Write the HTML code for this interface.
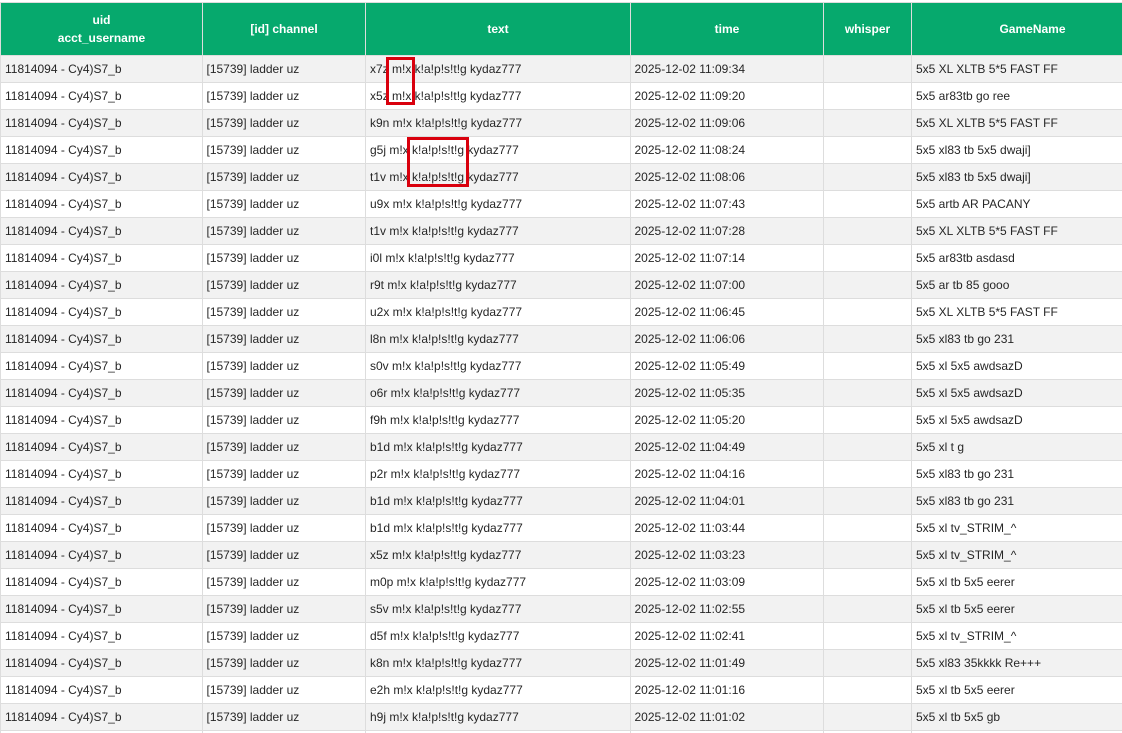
<!DOCTYPE html>
<html><head><meta charset="utf-8">
<style>
html,body{margin:0;padding:0;width:1122px;height:733px;overflow:hidden;background:#fff}
body{position:relative;font-family:"Liberation Sans",Arial,sans-serif;font-size:12px;color:#262626}
.tb{position:absolute;left:0;top:2px;width:1122px;height:760px;overflow:hidden}
table{border-collapse:collapse;table-layout:fixed;width:1153px;position:absolute;left:0;top:0}
th,td{border:1px solid #ddd;box-sizing:border-box;padding:0 5px 0 5px;white-space:nowrap;overflow:hidden}
thead th{background:#06a96d;color:#fff;font-weight:bold;text-align:center;height:53px;line-height:18px;border-color:#ddd}
tbody td{height:27px;line-height:26px;text-align:left;padding-left:4px}
tbody td:nth-child(1){padding-left:4px}
tbody td:nth-child(2){padding-left:3.5px}
tbody td:nth-child(3){padding-left:4px}
tbody td:nth-child(4){padding-left:3.5px}
tbody tr:nth-child(odd) td{background:#f2f2f2}
tbody tr:nth-child(even) td{background:#fff}
.r{position:absolute;border:3px solid #d9000d;box-sizing:border-box}
</style></head><body>
<div class="tb"><table>
<colgroup><col style="width:202px"><col style="width:163px"><col style="width:265px"><col style="width:193px"><col style="width:88px"><col style="width:242px"></colgroup>
<thead><tr><th>uid<br>acct_username</th><th>[id] channel</th><th>text</th><th>time</th><th>whisper</th><th>GameName</th></tr></thead>
<tbody>
<tr><td>11814094 - Cy4)S7_b</td><td>[15739] ladder uz</td><td>x7z m!x k!a!p!s!t!g kydaz777</td><td>2025-12-02 11:09:34</td><td></td><td>5x5 XL XLTB 5*5 FAST FF</td></tr>
<tr><td>11814094 - Cy4)S7_b</td><td>[15739] ladder uz</td><td>x5z m!x k!a!p!s!t!g kydaz777</td><td>2025-12-02 11:09:20</td><td></td><td>5x5 ar83tb go ree</td></tr>
<tr><td>11814094 - Cy4)S7_b</td><td>[15739] ladder uz</td><td>k9n m!x k!a!p!s!t!g kydaz777</td><td>2025-12-02 11:09:06</td><td></td><td>5x5 XL XLTB 5*5 FAST FF</td></tr>
<tr><td>11814094 - Cy4)S7_b</td><td>[15739] ladder uz</td><td>g5j m!x k!a!p!s!t!g kydaz777</td><td>2025-12-02 11:08:24</td><td></td><td>5x5 xl83 tb 5x5 dwaji]</td></tr>
<tr><td>11814094 - Cy4)S7_b</td><td>[15739] ladder uz</td><td>t1v m!x k!a!p!s!t!g kydaz777</td><td>2025-12-02 11:08:06</td><td></td><td>5x5 xl83 tb 5x5 dwaji]</td></tr>
<tr><td>11814094 - Cy4)S7_b</td><td>[15739] ladder uz</td><td>u9x m!x k!a!p!s!t!g kydaz777</td><td>2025-12-02 11:07:43</td><td></td><td>5x5 artb AR PACANY</td></tr>
<tr><td>11814094 - Cy4)S7_b</td><td>[15739] ladder uz</td><td>t1v m!x k!a!p!s!t!g kydaz777</td><td>2025-12-02 11:07:28</td><td></td><td>5x5 XL XLTB 5*5 FAST FF</td></tr>
<tr><td>11814094 - Cy4)S7_b</td><td>[15739] ladder uz</td><td>i0l m!x k!a!p!s!t!g kydaz777</td><td>2025-12-02 11:07:14</td><td></td><td>5x5 ar83tb asdasd</td></tr>
<tr><td>11814094 - Cy4)S7_b</td><td>[15739] ladder uz</td><td>r9t m!x k!a!p!s!t!g kydaz777</td><td>2025-12-02 11:07:00</td><td></td><td>5x5 ar tb 85 gooo</td></tr>
<tr><td>11814094 - Cy4)S7_b</td><td>[15739] ladder uz</td><td>u2x m!x k!a!p!s!t!g kydaz777</td><td>2025-12-02 11:06:45</td><td></td><td>5x5 XL XLTB 5*5 FAST FF</td></tr>
<tr><td>11814094 - Cy4)S7_b</td><td>[15739] ladder uz</td><td>l8n m!x k!a!p!s!t!g kydaz777</td><td>2025-12-02 11:06:06</td><td></td><td>5x5 xl83 tb go 231</td></tr>
<tr><td>11814094 - Cy4)S7_b</td><td>[15739] ladder uz</td><td>s0v m!x k!a!p!s!t!g kydaz777</td><td>2025-12-02 11:05:49</td><td></td><td>5x5 xl 5x5 awdsazD</td></tr>
<tr><td>11814094 - Cy4)S7_b</td><td>[15739] ladder uz</td><td>o6r m!x k!a!p!s!t!g kydaz777</td><td>2025-12-02 11:05:35</td><td></td><td>5x5 xl 5x5 awdsazD</td></tr>
<tr><td>11814094 - Cy4)S7_b</td><td>[15739] ladder uz</td><td>f9h m!x k!a!p!s!t!g kydaz777</td><td>2025-12-02 11:05:20</td><td></td><td>5x5 xl 5x5 awdsazD</td></tr>
<tr><td>11814094 - Cy4)S7_b</td><td>[15739] ladder uz</td><td>b1d m!x k!a!p!s!t!g kydaz777</td><td>2025-12-02 11:04:49</td><td></td><td>5x5 xl t g</td></tr>
<tr><td>11814094 - Cy4)S7_b</td><td>[15739] ladder uz</td><td>p2r m!x k!a!p!s!t!g kydaz777</td><td>2025-12-02 11:04:16</td><td></td><td>5x5 xl83 tb go 231</td></tr>
<tr><td>11814094 - Cy4)S7_b</td><td>[15739] ladder uz</td><td>b1d m!x k!a!p!s!t!g kydaz777</td><td>2025-12-02 11:04:01</td><td></td><td>5x5 xl83 tb go 231</td></tr>
<tr><td>11814094 - Cy4)S7_b</td><td>[15739] ladder uz</td><td>b1d m!x k!a!p!s!t!g kydaz777</td><td>2025-12-02 11:03:44</td><td></td><td>5x5 xl tv_STRIM_^</td></tr>
<tr><td>11814094 - Cy4)S7_b</td><td>[15739] ladder uz</td><td>x5z m!x k!a!p!s!t!g kydaz777</td><td>2025-12-02 11:03:23</td><td></td><td>5x5 xl tv_STRIM_^</td></tr>
<tr><td>11814094 - Cy4)S7_b</td><td>[15739] ladder uz</td><td>m0p m!x k!a!p!s!t!g kydaz777</td><td>2025-12-02 11:03:09</td><td></td><td>5x5 xl tb 5x5 eerer</td></tr>
<tr><td>11814094 - Cy4)S7_b</td><td>[15739] ladder uz</td><td>s5v m!x k!a!p!s!t!g kydaz777</td><td>2025-12-02 11:02:55</td><td></td><td>5x5 xl tb 5x5 eerer</td></tr>
<tr><td>11814094 - Cy4)S7_b</td><td>[15739] ladder uz</td><td>d5f m!x k!a!p!s!t!g kydaz777</td><td>2025-12-02 11:02:41</td><td></td><td>5x5 xl tv_STRIM_^</td></tr>
<tr><td>11814094 - Cy4)S7_b</td><td>[15739] ladder uz</td><td>k8n m!x k!a!p!s!t!g kydaz777</td><td>2025-12-02 11:01:49</td><td></td><td>5x5 xl83 35kkkk Re+++</td></tr>
<tr><td>11814094 - Cy4)S7_b</td><td>[15739] ladder uz</td><td>e2h m!x k!a!p!s!t!g kydaz777</td><td>2025-12-02 11:01:16</td><td></td><td>5x5 xl tb 5x5 eerer</td></tr>
<tr><td>11814094 - Cy4)S7_b</td><td>[15739] ladder uz</td><td>h9j m!x k!a!p!s!t!g kydaz777</td><td>2025-12-02 11:01:02</td><td></td><td>5x5 xl tb 5x5 gb</td></tr>
<tr><td>&nbsp;</td><td></td><td></td><td></td><td></td><td></td></tr>
</tbody></table></div>
<div class="r" style="left:386px;top:57px;width:29px;height:48px"></div>
<div class="r" style="left:407px;top:137px;width:62px;height:50px"></div>
</body></html>
